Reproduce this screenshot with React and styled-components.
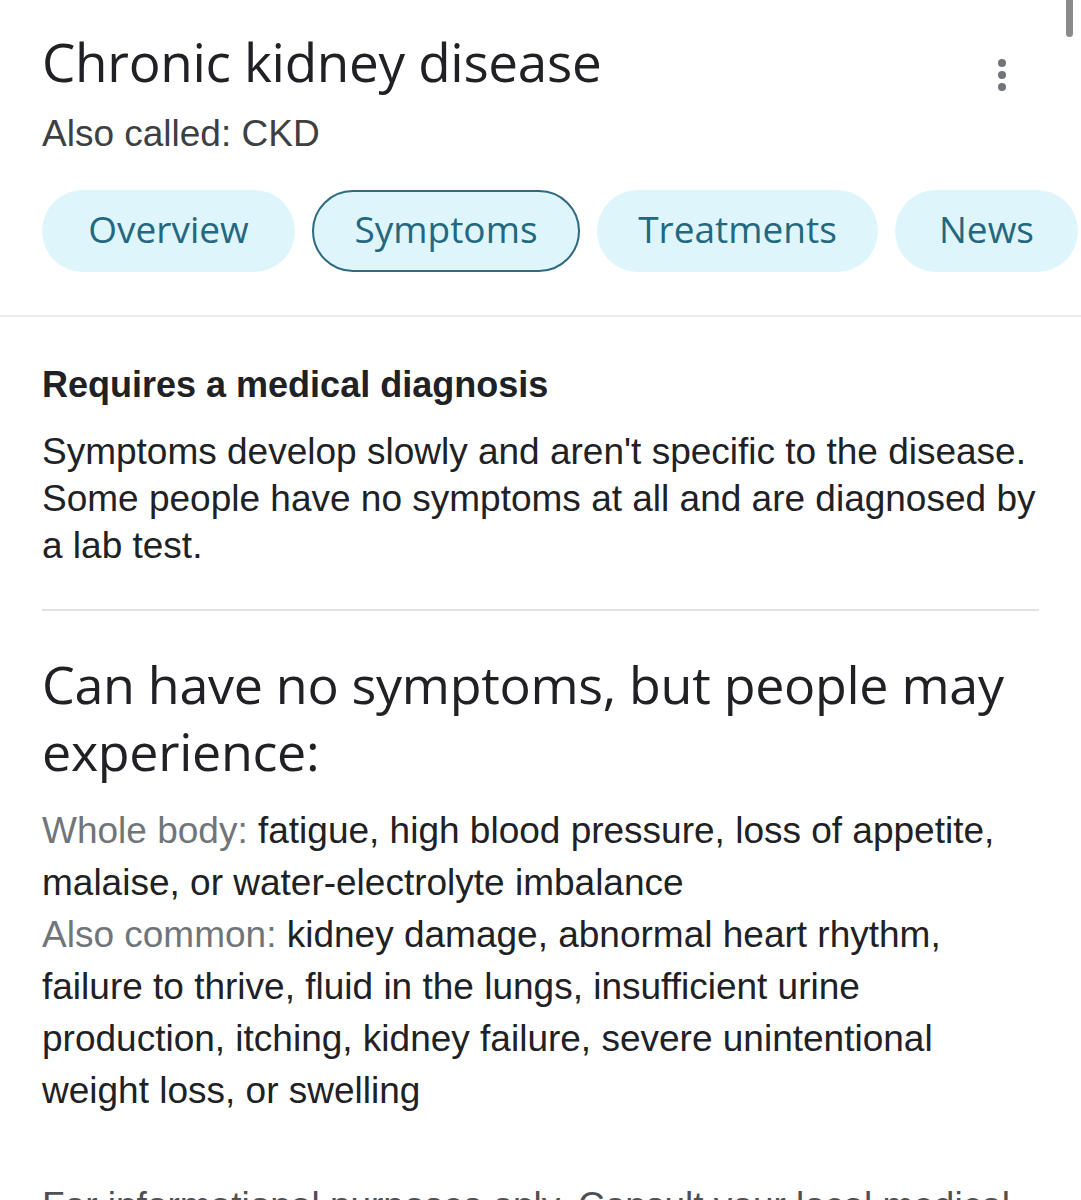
import React from 'react'
import styled, { createGlobalStyle } from 'styled-components'

const GlobalStyle = createGlobalStyle`
  html, body {
    margin: 0;
    padding: 0;
    background: #ffffff;
  }
  body {
    font-family: 'Liberation Sans', Arial, sans-serif;
    color: #202124;
    overflow: hidden;
  }
`

const Page = styled.div`
  position: relative;
  width: 1081px;
  height: 1200px;
  overflow: hidden;
  background: #ffffff;
`

const ScrollThumb = styled.div`
  position: absolute;
  top: -6px;
  right: 8px;
  width: 7px;
  height: 43px;
  border-radius: 4px;
  background: #8a8a8a;
`

const Header = styled.div`
  display: flex;
  align-items: flex-start;
  justify-content: space-between;
  padding: 30px 75px 0 42px;
`

const TitleBlock = styled.div`
  display: flex;
  flex-direction: column;
`

const Title = styled.h1`
  margin: 0;
  font-family: 'Open Sans', sans-serif;
  font-weight: 400;
  font-size: 53px;
  line-height: 64px;
  letter-spacing: -0.3px;
  color: #202124;
`

const Subtitle = styled.div`
  margin-top: 18px;
  font-size: 37px;
  line-height: 44px;
  color: #3c4043;
`

const MenuButton = styled.div`
  display: flex;
  flex-direction: column;
  gap: 4px;
  margin-top: 29px;
`

const Dot = styled.span`
  width: 8px;
  height: 8px;
  border-radius: 50%;
  background: #70757a;
`

const Tabs = styled.div`
  display: flex;
  gap: 17px;
  padding: 34px 0 43px 42px;
  border-bottom: 2px solid #ebebeb;
  overflow: hidden;
`

const Tab = styled.div`
  flex: 0 0 auto;
  box-sizing: border-box;
  height: 82px;
  width: ${p => p.$w}px;
  padding-bottom: 5px;
  display: flex;
  align-items: center;
  justify-content: center;
  border-radius: 41px;
  background: #def5fb;
  border: 2px solid ${p => (p.$active ? '#2e6a80' : 'transparent')};
  font-family: 'Open Sans', sans-serif;
  font-weight: 500;
  font-size: 37px;
  color: #23687f;
`

const Content = styled.div`
  padding: 0 42px;
`

const Section = styled.div`
  padding: 48px 0 40px;
  border-bottom: 2px solid #e1e3e6;
`

const SectionLabel = styled.div`
  font-weight: 700;
  font-size: 36px;
  line-height: 40px;
  color: #202124;
`

const Paragraph = styled.p`
  margin: 23px 0 0;
  font-size: 37px;
  line-height: 47px;
  color: #202124;
`

const Heading = styled.h2`
  margin: 39px 0 0;
  font-family: 'Open Sans', sans-serif;
  font-weight: 400;
  font-size: 52px;
  line-height: 67px;
  letter-spacing: -0.3px;
  color: #202124;
`

const List = styled.div`
  margin-top: 21px;
  font-size: 37px;
  line-height: 52px;
  color: #202124;
`

const Muted = styled.span`
  color: #70757a;
`

const Footnote = styled.div`
  margin-top: 63px;
  font-size: 37px;
  line-height: 52px;
  color: #4d5156;
`

const tabs = [
  { label: 'Overview', w: 253 },
  { label: 'Symptoms', w: 268, active: true },
  { label: 'Treatments', w: 281 },
  { label: 'News', w: 183 }
]

const App = () => (
  <>
    <GlobalStyle />
    <Page>
      <ScrollThumb />
      <Header>
        <TitleBlock>
          <Title>Chronic kidney disease</Title>
          <Subtitle>Also called: CKD</Subtitle>
        </TitleBlock>
        <MenuButton>
          <Dot />
          <Dot />
          <Dot />
        </MenuButton>
      </Header>
      <Tabs>
        {tabs.map(t => (
          <Tab key={t.label} $w={t.w} $active={t.active}>
            {t.label}
          </Tab>
        ))}
      </Tabs>
      <Content>
        <Section>
          <SectionLabel>Requires a medical diagnosis</SectionLabel>
          <Paragraph>
            Symptoms develop slowly and aren't specific to the disease.
            <br />
            Some people have no symptoms at all and are diagnosed by
            <br />
            a lab test.
          </Paragraph>
        </Section>
        <Heading>
          Can have no symptoms, but people may
          <br />
          experience:
        </Heading>
        <List>
          <Muted>Whole body:</Muted> fatigue, high blood pressure, loss of appetite,
          <br />
          malaise, or water-electrolyte imbalance
          <br />
          <Muted>Also common:</Muted> kidney damage, abnormal heart rhythm,
          <br />
          failure to thrive, fluid in the lungs, insufficient urine
          <br />
          production, itching, kidney failure, severe unintentional
          <br />
          weight loss, or swelling
        </List>
        <Footnote>For informational purposes only. Consult your local medical authority for advice.</Footnote>
      </Content>
    </Page>
  </>
)

export default App
